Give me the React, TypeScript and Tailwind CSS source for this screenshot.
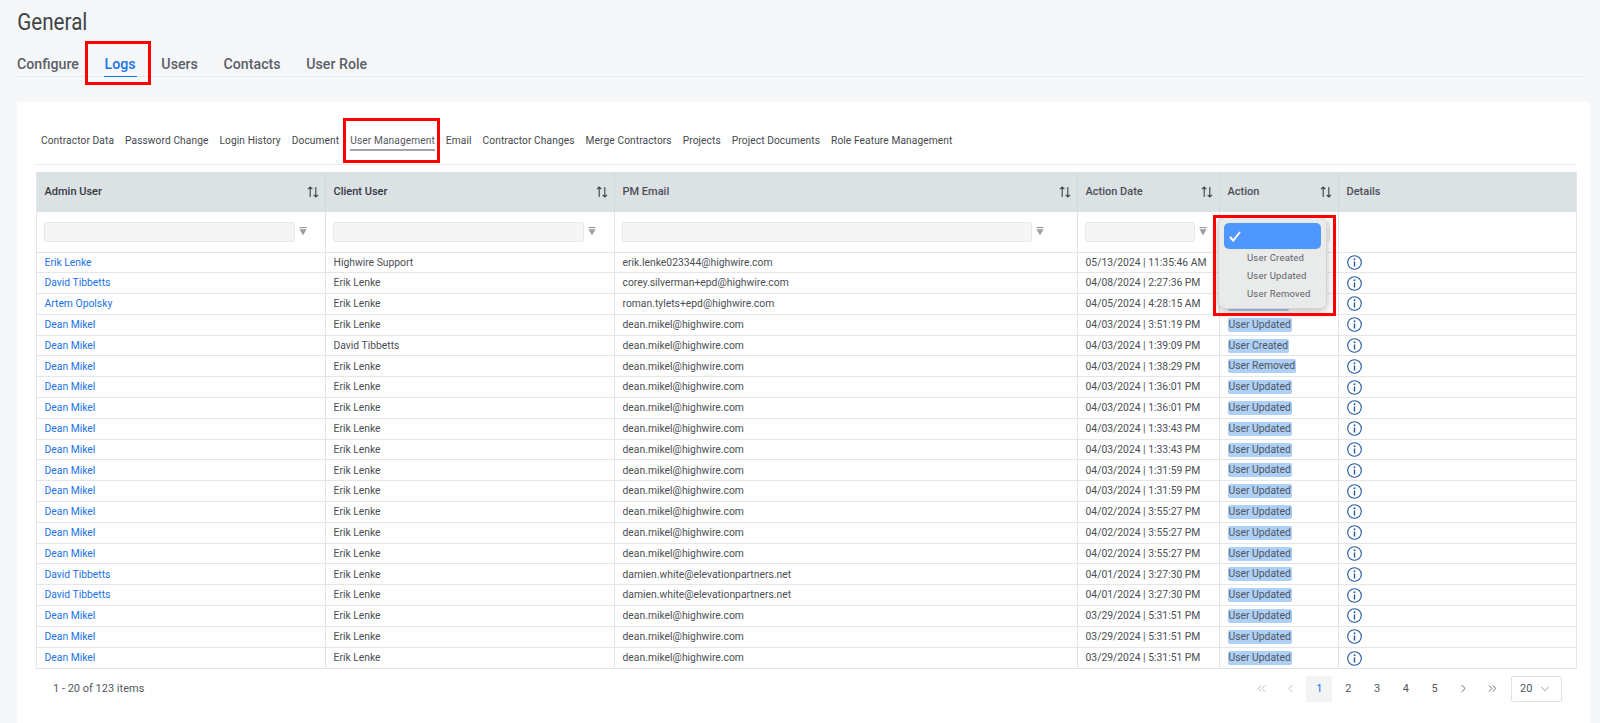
import { ChevronDown, ChevronLeft, ChevronRight, ChevronsLeft, ChevronsRight } from "lucide-react";

const font = "font-['Roboto','Liberation_Sans',sans-serif]";
const cols = "grid grid-cols-[289px_289px_463px_142px_119px_1fr]";

const rows: [string, string, string, string, string][] = [
  ["Erik Lenke", "Highwire Support", "erik.lenke023344@highwire.com", "05/13/2024 | 11:35:46 AM", ""],
  ["David Tibbetts", "Erik Lenke", "corey.silverman+epd@highwire.com", "04/08/2024 | 2:27:36 PM", ""],
  ["Artem Opolsky", "Erik Lenke", "roman.tylets+epd@highwire.com", "04/05/2024 | 4:28:15 AM", "User Created"],
  ["Dean Mikel", "Erik Lenke", "dean.mikel@highwire.com", "04/03/2024 | 3:51:19 PM", "User Updated"],
  ["Dean Mikel", "David Tibbetts", "dean.mikel@highwire.com", "04/03/2024 | 1:39:09 PM", "User Created"],
  ["Dean Mikel", "Erik Lenke", "dean.mikel@highwire.com", "04/03/2024 | 1:38:29 PM", "User Removed"],
  ["Dean Mikel", "Erik Lenke", "dean.mikel@highwire.com", "04/03/2024 | 1:36:01 PM", "User Updated"],
  ["Dean Mikel", "Erik Lenke", "dean.mikel@highwire.com", "04/03/2024 | 1:36:01 PM", "User Updated"],
  ["Dean Mikel", "Erik Lenke", "dean.mikel@highwire.com", "04/03/2024 | 1:33:43 PM", "User Updated"],
  ["Dean Mikel", "Erik Lenke", "dean.mikel@highwire.com", "04/03/2024 | 1:33:43 PM", "User Updated"],
  ["Dean Mikel", "Erik Lenke", "dean.mikel@highwire.com", "04/03/2024 | 1:31:59 PM", "User Updated"],
  ["Dean Mikel", "Erik Lenke", "dean.mikel@highwire.com", "04/03/2024 | 1:31:59 PM", "User Updated"],
  ["Dean Mikel", "Erik Lenke", "dean.mikel@highwire.com", "04/02/2024 | 3:55:27 PM", "User Updated"],
  ["Dean Mikel", "Erik Lenke", "dean.mikel@highwire.com", "04/02/2024 | 3:55:27 PM", "User Updated"],
  ["Dean Mikel", "Erik Lenke", "dean.mikel@highwire.com", "04/02/2024 | 3:55:27 PM", "User Updated"],
  ["David Tibbetts", "Erik Lenke", "damien.white@elevationpartners.net", "04/01/2024 | 3:27:30 PM", "User Updated"],
  ["David Tibbetts", "Erik Lenke", "damien.white@elevationpartners.net", "04/01/2024 | 3:27:30 PM", "User Updated"],
  ["Dean Mikel", "Erik Lenke", "dean.mikel@highwire.com", "03/29/2024 | 5:31:51 PM", "User Updated"],
  ["Dean Mikel", "Erik Lenke", "dean.mikel@highwire.com", "03/29/2024 | 5:31:51 PM", "User Updated"],
  ["Dean Mikel", "Erik Lenke", "dean.mikel@highwire.com", "03/29/2024 | 5:31:51 PM", "User Updated"],
];

const subTabs = ["Contractor Data", "Password Change", "Login History", "Document", "User Management", "Email", "Contractor Changes", "Merge Contractors", "Projects", "Project Documents", "Role Feature Management"];

function SortIcon() {
  return (
    <svg width="12" height="12" viewBox="0 0 12 12" fill="none" stroke="#3a4048" strokeWidth="1.1" className="shrink-0">
      <path d="M3.2 11V1M1 3.2 3.2 1l2.2 2.2" />
      <path d="M8.8 1v10M6.6 8.8 8.8 11 11 8.8" />
    </svg>
  );
}

function FunnelIcon() {
  return (
    <svg width="8" height="9" viewBox="0 0 8 9" className="shrink-0">
      <rect x="0.5" y="0" width="7" height="1.2" fill="#9a9ea3" />
      <path d="M0.5 2.2h7L4 8.6z" fill="#9a9ea3" />
    </svg>
  );
}

function InfoIcon() {
  return (
    <svg width="15" height="15" viewBox="0 0 15 15" fill="none" className="shrink-0">
      <circle cx="7.5" cy="7.5" r="6.8" stroke="#23579f" strokeWidth="1.1" />
      <circle cx="7.5" cy="4.3" r="0.95" fill="#23579f" />
      <path d="M7.5 6.5v5" stroke="#23579f" strokeWidth="1.4" />
    </svg>
  );
}

function HeaderCell({ label, sort = true, dark = false }: { label: string; sort?: boolean; dark?: boolean }) {
  return (
    <div className="flex items-center justify-between pl-[7.5px] pr-[6px] border-r border-[#d3d8dc] last:border-r-0">
      <span className={`text-[11px] font-medium ${dark ? "text-[#33383e]" : "text-[#4a4f55]"}`}>{label}</span>
      {sort && <SortIcon />}
    </div>
  );
}

function FilterCell({ width, funnel = true }: { width: string; funnel?: boolean }) {
  return (
    <div className="flex items-center gap-[4px] pl-[7px] border-r border-[#e2e5e8]">
      <div className={`h-5 ${width} rounded-[3px] border border-[#e8e8e8] bg-[#f6f5f5]`} />
      {funnel && <FunnelIcon />}
    </div>
  );
}

export default function App() {
  return (
    <div className={`relative h-[723px] overflow-hidden bg-[#f6f7f9] ${font}`}>
      <h1 className="pl-[20px] pt-[6px] h-[40px] text-[24px] leading-[32px] font-normal text-[#3f4347] origin-left scale-x-[0.86]">General</h1>

      <div className="mx-[17px] mt-[13px] flex h-[24px] items-center gap-[25.7px] border-b border-[#e7e9ec] text-[14.2px] font-medium text-[#5b6068]">
        <span>Configure</span>
        <span className="relative flex h-full items-center text-[#1a73e8]">
          Logs
          <span className="absolute -left-[1px] -right-[1px] bottom-[-1px] h-px bg-[#1a73e8]" />
        </span>
        <span>Users</span>
        <span>Contacts</span>
        <span>User Role</span>
      </div>

      <main className="ml-[17px] mr-[10px] mt-[25px] h-[628px] bg-white pl-[19px] pr-[13px]">
        <div className="flex h-[63px] items-center gap-[11px] border-b border-[#e9ecef] pl-[5px] pt-[15px] text-[10.18px] tracking-[0.1px] text-[#44484d]">
          {subTabs.map((t) => (
            <span key={t} className={`relative ${t === "User Management" ? "text-[#55595e]" : ""}`}>
              {t}
              {t === "User Management" && <span className="absolute inset-x-0 -bottom-[3px] h-[2px] bg-[#a0a4ab]" />}
            </span>
          ))}
        </div>

        <div className="mt-[7px] border-b border-[#dfe2e8] border-x border-x-[#e4e7ea]">
          <div className={`${cols} h-[40px] bg-[#dce1e4]`}>
            <HeaderCell label="Admin User" dark />
            <HeaderCell label="Client User" dark />
            <HeaderCell label="PM Email" />
            <HeaderCell label="Action Date" />
            <HeaderCell label="Action" />
            <HeaderCell label="Details" sort={false} />
          </div>
          <div className={`${cols} h-[40.5px] border-b border-[#e2e5e8]`}>
            <FilterCell width="w-[251px]" />
            <FilterCell width="w-[251px]" />
            <FilterCell width="w-[410px]" />
            <FilterCell width="w-[110px]" />
            <FilterCell width="w-[103px]" funnel={false} />
            <div />
          </div>
          {rows.map((r, i) => (
            <div key={i} className={`${cols} h-[20.8px] border-b border-[#e4e7ea] last:border-b-0 text-[10.35px] text-[#4b4f54]`}>
              <div className="flex items-center pl-[7.5px] border-r border-[#e2e5e8] text-[#1a73e8]">{r[0]}</div>
              <div className="flex items-center pl-[7.5px] border-r border-[#e2e5e8]">{r[1]}</div>
              <div className="flex items-center pl-[7.5px] border-r border-[#e2e5e8]">{r[2]}</div>
              <div className="flex items-center pl-[7.5px] border-r border-[#e2e5e8]">{r[3]}</div>
              <div className="flex items-center pl-[7.5px] border-r border-[#e2e5e8]">
                {r[4] && <span className="rounded-[2px] bg-[#aed0f7] px-px text-[#50565e] leading-[14px]">{r[4]}</span>}
              </div>
              <div className="flex items-center pl-2"><InfoIcon /></div>
            </div>
          ))}
        </div>

        <div className="mt-[6.5px] flex h-[26px] items-center text-[11px] text-[#55595e]">
          <span className="pl-[17px]">1 - 20 of 123 items</span>
          <div className="ml-auto mr-[15px] flex items-center gap-[2.8px]">
            {[ChevronsLeft, ChevronLeft].map((I, i) => (
              <span key={i} className="flex h-[26px] w-[26px] items-center justify-center text-[#a9adb2]"><I size={13} strokeWidth={1.5} /></span>
            ))}
            <span className="flex h-[26px] w-[26px] items-center justify-center rounded-[2px] bg-[#f1f3f5] text-[#1a73e8]">1</span>
            {["2", "3", "4", "5"].map((n) => (
              <span key={n} className="flex h-[26px] w-[26px] items-center justify-center">{n}</span>
            ))}
            {[ChevronRight, ChevronsRight].map((I, i) => (
              <span key={i} className="flex h-[26px] w-[26px] items-center justify-center text-[#44484d]"><I size={13} strokeWidth={1.5} /></span>
            ))}
            <span className="ml-[3px] flex h-[26px] w-[51px] items-center justify-between rounded-[2px] border border-[#dfe1e4] pl-2 pr-[9px]">
              20 <ChevronDown size={14} strokeWidth={1.25} className="text-[#7a7e84]" />
            </span>
          </div>
        </div>
      </main>

      {/* dropdown popover */}
      <div className="absolute left-[1218px] top-[217px] h-[92px] w-[109px] rounded-[7px] border border-[#d2d4d6] bg-[#e9ebeb] p-[5px] shadow-[0_3px_10px_rgba(0,0,0,0.25)] text-[9.5px] tracking-[0.2px] text-[#5f6368]">
        <div className="flex h-[26px] items-center rounded-[5px] bg-[#4d97ff] pl-[5px]">
          <svg width="12" height="11" viewBox="0 0 12 11" fill="none" stroke="#fff" strokeWidth="2"><path d="M1 6l3.2 3.6L11 1" /></svg>
        </div>
        <div className="flex h-[18px] items-center pl-[23px]">User Created</div>
        <div className="flex h-[18px] items-center pl-[23px]">User Updated</div>
        <div className="flex h-[18px] items-center pl-[23px]">User Removed</div>
      </div>

      {/* annotation boxes */}
      <div className="absolute left-[85px] top-[41px] h-[44px] w-[66px] border-[3px] border-[#f00]" />
      <div className="absolute left-[343px] top-[118px] h-[45px] w-[97px] border-[3px] border-[#f00]" />
      <div className="absolute left-[1213px] top-[215px] h-[101px] w-[123px] border-[3px] border-[#f00]" />
    </div>
  );
}
